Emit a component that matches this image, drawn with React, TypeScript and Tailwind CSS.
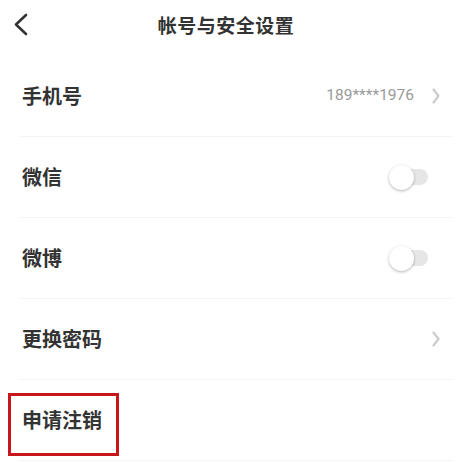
import React from 'react';

const font = { fontFamily: '"Noto Sans CJK SC", "Noto Sans", sans-serif' };

const Chevron = () => (
  <svg width="8" height="16" viewBox="0 0 8 16" className="text-[#cccccc]">
    <path d="M1.5 1.5 L6.5 8 L1.5 14.5" fill="none" stroke="currentColor" strokeWidth="2.2" strokeLinecap="round" strokeLinejoin="round" />
  </svg>
);

const Toggle = () => (
  <div className="relative h-[25px] w-[39px] flex items-center">
    <div className="ml-[6px] h-[16px] w-[33px] rounded-full bg-[#e6e6e6]" />
    <div className="absolute left-0 top-0 h-[25px] w-[25px] rounded-full bg-white shadow-[0_1px_3px_rgba(0,0,0,0.3)]" />
  </div>
);

const Row = ({ label, right, boxed }: { label: string; right?: React.ReactNode; boxed?: boolean }) => (
  <div className="ml-[20px] mr-[14px] h-[81px] flex items-center justify-between border-b border-[#f4f4f4]">
    <div className="relative">
      {boxed && (
        <div className="absolute -left-[12px] -right-[17px] -top-[12px] -bottom-[21px] border-[3px] border-[#c8161d]" />
      )}
      <span className="pl-[2px] text-[20px] font-semibold text-[#333]">{label}</span>
    </div>
    {right}
  </div>
);

export default function App() {
  return (
    <div className="w-[466px] h-[462px] bg-white overflow-hidden" style={font}>
      <div className="relative h-[50px] flex items-center justify-center">
        <div className="absolute left-[13px] top-[13px]">
          <svg width="16" height="24" viewBox="0 0 16 24">
            <path d="M13 2 L3 11.5 L13 21" fill="none" stroke="#333" strokeWidth="2.6" strokeLinecap="round" strokeLinejoin="round" />
          </svg>
        </div>
        <h1 className="mr-[14px] text-[19px] font-semibold text-[#333] tracking-[0.5px]">帐号与安全设置</h1>
      </div>
      <div className="pt-[6px]">
        <Row
          label="手机号"
          right={
            <div className="flex items-center gap-[18px] pr-[12px]">
              <span className="text-[15.5px] text-[#999]" style={{ fontFamily: 'Roboto, sans-serif' }}>189****1976</span>
              <Chevron />
            </div>
          }
        />
        <Row label="微信" right={<div className="pr-[24px]"><Toggle /></div>} />
        <Row label="微博" right={<div className="pr-[24px]"><Toggle /></div>} />
        <Row label="更换密码" right={<div className="pr-[12px]"><Chevron /></div>} />
        <Row label="申请注销" boxed />
      </div>
    </div>
  );
}
